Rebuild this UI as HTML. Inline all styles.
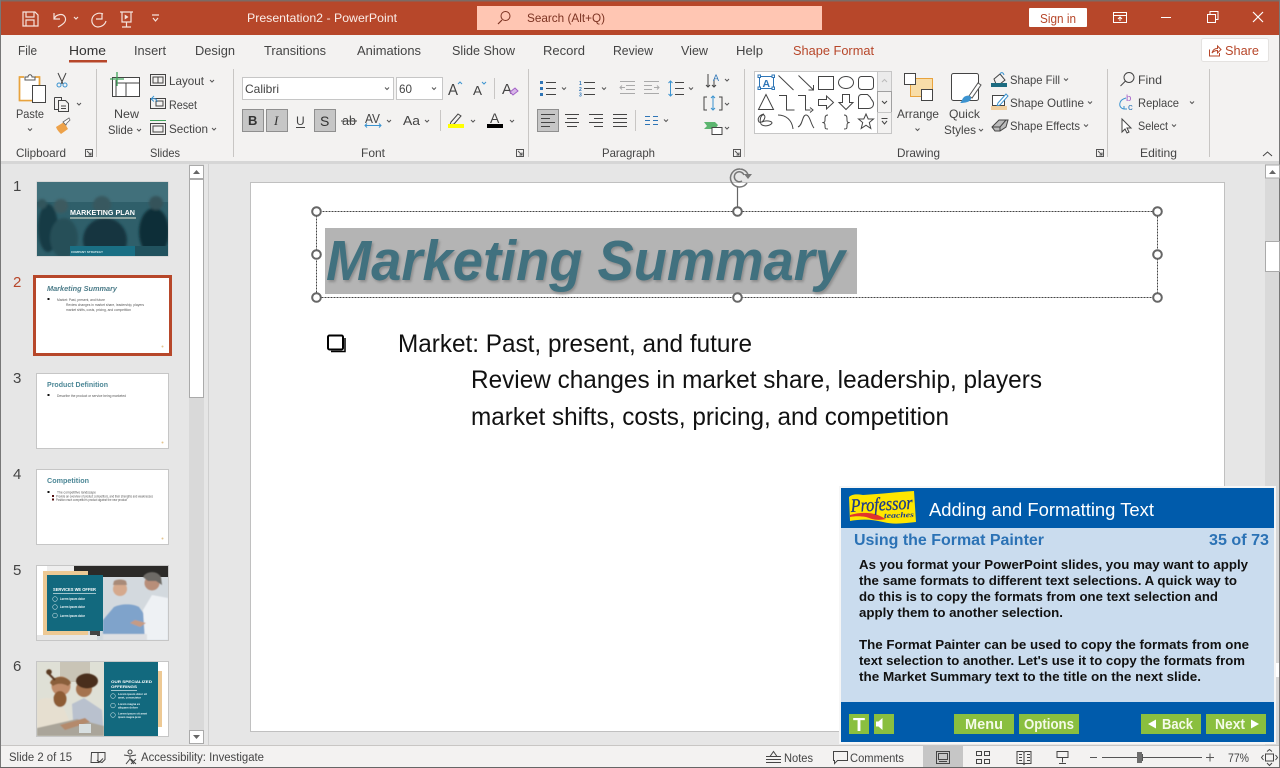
<!DOCTYPE html>
<html><head><meta charset="utf-8"><title>PowerPoint</title>
<style>
html,body{margin:0;padding:0;width:1280px;height:768px;overflow:hidden;background:#e6e6e6}
svg{display:block;font-family:"Liberation Sans",sans-serif}
.t{font-size:12px;fill:#444}
.tab{font-size:13px;fill:#444}
.st{font-size:11.5px;fill:#444}
.i{fill:none;stroke:#444;stroke-width:1}
.w{fill:#fff;stroke:#444;stroke-width:1}
.c{fill:none;stroke:#555;stroke-width:1}
.b{fill:none;stroke:#3b93d0;stroke-width:1}
.h{fill:#fff;stroke:#666;stroke-width:2}
.p{font-size:13px;font-weight:bold;fill:#111}
.g{fill:#8abf3f}
.gt{font-size:15px;font-weight:bold;fill:#f4fae8}
.tt{font-size:4px;fill:#555}
</style></head><body>
<svg width="1280" height="768" viewBox="0 0 1280 768" xmlns="http://www.w3.org/2000/svg">
<defs>
<filter id="bl" x="-30%" y="-30%" width="160%" height="160%"><feGaussianBlur stdDeviation="1.200"/></filter>
<filter id="bs" x="-30%" y="-30%" width="160%" height="160%"><feGaussianBlur stdDeviation=".6"/></filter>
<filter id="sh" x="-5%" y="-20%" width="110%" height="140%"><feGaussianBlur stdDeviation="1.300"/></filter>
<clipPath id="c1"><rect x="37" y="182" width="131" height="74"/></clipPath>
<clipPath id="c5"><rect x="37" y="566" width="131" height="74"/></clipPath>
<clipPath id="c6"><rect x="37" y="662" width="131" height="74"/></clipPath>
</defs>

<!-- backgrounds -->
<rect width="1280" height="768" fill="#e6e6e6"/>
<rect width="1280" height="35" fill="#b7472a"/>
<rect width="1280" height="1.500" fill="#7d6a64"/>
<rect y="35" width="1280" height="126" fill="#f3f2f1"/>
<rect y="161" width="1280" height="3" fill="#d6d6d6"/>

<!-- QAT -->
<g fill="none" stroke="#f6e3dc" stroke-width="1.200">
<path d="M23 12h12l3 3v11H23z"/><path d="M26 12v5h8v-5M26 26v-6h8v6"/>
<path d="M54 13v6h6M54 19c2-5 9-6 11-2s-1 7-7 10"/>
<path d="M74 17l2 2 2-2"/>
<path d="M102 13v6h-6M103 14c-4-2-10 0-11 5s3 8 6 8 7-2 8-6"/>
<path d="M120 12h13M122 12v10h9V12M126.500 22v5M122 27h9"/><path d="M125 15l3 2-3 2z" fill="#f6e3dc" stroke-width=".6"/>
<path d="M152 15h7M153 18l2.500 3 2.500-3"/>
</g>
<text x="247" y="22" font-size="12" fill="#fbeee9" textLength="150" lengthAdjust="spacingAndGlyphs">Presentation2  -  PowerPoint</text>

<!-- Search -->
<rect x="477" y="6" width="345" height="24" fill="#ffc6b3"/>
<circle cx="505.500" cy="16" r="4.500" fill="none" stroke="#7c3322" stroke-width="1"/><path d="M502 20l-4 4" stroke="#7c3322" stroke-width="1.200"/>
<text x="527" y="22" font-size="12" fill="#7c3322" textLength="78" lengthAdjust="spacingAndGlyphs">Search (Alt+Q)</text>

<!-- Sign in + window controls -->
<rect x="1029" y="8" width="58" height="19" rx="1" fill="#fff"/>
<text x="1040" y="23" font-size="12.500" fill="#b7472a" textLength="36" lengthAdjust="spacingAndGlyphs">Sign in</text>
<g fill="none" stroke="#fff" stroke-width="1">
<path d="M1113.500 12.500h13v10h-13zM1113.500 15.500h13M1120 21v-4M1118 19l2-2 2 2"/>
<path d="M1161 17.500h10"/>
<path d="M1207.500 14.500h8v8h-8zM1210 14v-2.500h8v8h-2.500"/>
<path d="M1253 12l10 10M1263 12l-10 10" stroke-width="1.200"/>
</g>

<!-- Tabs -->
<text class="tab" x="18" y="55" textLength="19" lengthAdjust="spacingAndGlyphs">File</text>
<text class="tab" x="69" y="55" textLength="37" lengthAdjust="spacingAndGlyphs" style="fill:#333">Home</text>
<rect x="69" y="60" width="38" height="2.500" fill="#b7472a"/>
<text class="tab" x="134" y="55" textLength="32" lengthAdjust="spacingAndGlyphs">Insert</text>
<text class="tab" x="195" y="55" textLength="40" lengthAdjust="spacingAndGlyphs">Design</text>
<text class="tab" x="264" y="55" textLength="62" lengthAdjust="spacingAndGlyphs">Transitions</text>
<text class="tab" x="357" y="55" textLength="64" lengthAdjust="spacingAndGlyphs">Animations</text>
<text class="tab" x="452" y="55" textLength="63" lengthAdjust="spacingAndGlyphs">Slide Show</text>
<text class="tab" x="543" y="55" textLength="42" lengthAdjust="spacingAndGlyphs">Record</text>
<text class="tab" x="613" y="55" textLength="40" lengthAdjust="spacingAndGlyphs">Review</text>
<text class="tab" x="681" y="55" textLength="27" lengthAdjust="spacingAndGlyphs">View</text>
<text class="tab" x="736" y="55" textLength="27" lengthAdjust="spacingAndGlyphs">Help</text>
<text class="tab" x="793" y="55" textLength="81" lengthAdjust="spacingAndGlyphs" style="fill:#b7472a">Shape Format</text>
<rect x="1201.500" y="38.500" width="67" height="23" rx="2" fill="#fff" stroke="#e4e2e0"/>
<path d="M1209.500 49.500v6.500h10v-3M1212 53c.8-3.500 3-4.500 5.500-4.500V46l3.500 3.500-3.500 3.500v-2.500c-2 0-4 .8-5.500 2.500z" fill="none" stroke="#b7472a"/>
<text x="1225" y="55" font-size="13" fill="#b7472a" textLength="34" lengthAdjust="spacingAndGlyphs">Share</text>

<!-- Group separators -->
<g stroke="#c8c6c4"><path d="M96.500 69v88M233.500 69v88M528.500 69v88M744.500 69v88M1107.500 69v88M1209.500 69v88"/></g>

<!-- Clipboard -->
<path d="M24 77h-4.500v23.500H32M35 77h4.500v8" fill="#fff" stroke="#e8a33d" stroke-width="1.500"/>
<rect x="20.500" y="78" width="18" height="22" fill="#fff"/>
<path d="M24 77h-4.500v23.500H32M35 77h4.500v8" fill="none" stroke="#e8a33d" stroke-width="1.500"/>
<path d="M25 79v-2h3c0-3 4-3 4 0h3v3h-10z" fill="#fff" stroke="#555"/>
<rect x="32.500" y="85.500" width="13" height="17" fill="#fff" stroke="#444"/>
<text class="t" x="16" y="118" textLength="28" lengthAdjust="spacingAndGlyphs">Paste</text>
<path class="c" d="M28 128.500l2 2 2-2"/>
<path class="i" d="M58 73l5 11M66 73l-5 11"/><circle cx="59" cy="85" r="2" class="b"/><circle cx="65" cy="85" r="2" class="b"/>
<path class="i" d="M54.500 97.500h7v3M54.500 97.500v12h4M58.500 100.500h7l3 3v8h-10z"/><path class="i" d="M61 106h5M61 108.500h5"/>
<path class="c" d="M77 103l2 2 2-2"/>
<path d="M56 127l8-5 4 7-7 5c-2-2-4-4-5-7z" fill="#eda24a"/><path d="M63 122l3-2 3-2 1 2-3 3 -1 2z" fill="#fff" stroke="#666" stroke-width=".8"/>
<text class="t" x="16" y="157" textLength="50" lengthAdjust="spacingAndGlyphs">Clipboard</text>
<path class="c" d="M85.500 149.500h7v7h-7zM87 151l4 4M91 152.500V155h-2.500" stroke-width=".8"/>

<!-- Slides -->
<rect x="112.500" y="77.500" width="27" height="19" fill="#fff" stroke="#444"/><path class="i" d="M116 83h23M126 83v13M116 80v16"/>
<path d="M117 72v14M110 79h14" stroke="#3fa35a" stroke-width="1.300"/>
<text class="t" x="114" y="118" textLength="25" lengthAdjust="spacingAndGlyphs">New</text>
<text class="t" x="108" y="134" textLength="25" lengthAdjust="spacingAndGlyphs">Slide</text>
<path class="c" d="M137 129l2 2 2-2"/>
<path class="i" d="M150.500 74.500h15v11h-15zM153 77h10v6h-10zM158 77v6"/>
<text class="t" x="169" y="85" textLength="35" lengthAdjust="spacingAndGlyphs">Layout</text><path class="c" d="M210 80l2 2 2-2"/>
<path class="i" d="M150.500 98.500h15v10h-15zM156 101h7v5h-7z"/><path class="b" d="M151 99l3-3M151 99l3 2.500M151 99c4-1 6 0 6 3"/>
<text class="t" x="169" y="109" textLength="28" lengthAdjust="spacingAndGlyphs">Reset</text>
<path d="M150 120.500h16" stroke="#3fa35a"/><path class="i" d="M150.500 123.500h15v11h-15zM153 126h10v6h-10z"/>
<text class="t" x="169" y="133" textLength="39" lengthAdjust="spacingAndGlyphs">Section</text><path class="c" d="M212 128l2 2 2-2"/>
<text class="t" x="150" y="157" textLength="30" lengthAdjust="spacingAndGlyphs">Slides</text>

<!-- Font -->
<rect x="242.500" y="77.500" width="151" height="22" fill="#fff" stroke="#c6c6c6"/>
<text class="t" x="245" y="93" textLength="34" lengthAdjust="spacingAndGlyphs">Calibri</text><path class="c" d="M385 87.500l2 2 2-2"/>
<rect x="396.500" y="77.500" width="46" height="22" fill="#fff" stroke="#c6c6c6"/>
<text class="t" x="399" y="93" textLength="13" lengthAdjust="spacingAndGlyphs">60</text><path class="c" d="M432 87.500l2 2 2-2"/>
<text x="448" y="95" font-size="16" fill="#444" textLength="10" lengthAdjust="spacingAndGlyphs">A</text><path d="M458 84l2-2 2 2" fill="none" stroke="#3b93d0"/>
<text x="473" y="95" font-size="13" fill="#444" textLength="9" lengthAdjust="spacingAndGlyphs">A</text><path d="M482 82l2 2 2-2" fill="none" stroke="#3b93d0"/>
<path stroke="#c8c6c4" d="M494.500 78v21"/>
<text x="502" y="94" font-size="15" fill="#444" textLength="10" lengthAdjust="spacingAndGlyphs">A</text><path d="M510 92l5-4 3 3-5 4z" fill="#d8b8e8" stroke="#a25fc7"/>
<rect x="242.500" y="109.500" width="21" height="22" fill="#c6c6c6" stroke="#8f8f8f"/>
<text x="248" y="125" font-size="13" font-weight="bold" fill="#333">B</text>
<rect x="266.500" y="109.500" width="21" height="22" fill="#c6c6c6" stroke="#8f8f8f"/>
<text x="274" y="125" font-size="13" font-style="italic" fill="#333" font-family="Liberation Serif">I</text>
<text x="296" y="125" font-size="12" fill="#444">U</text><path d="M296 127.500h9" stroke="#444"/>
<rect x="314.500" y="109.500" width="21" height="22" fill="#c6c6c6" stroke="#8f8f8f"/>
<text x="320" y="126" font-size="14" fill="#333">S</text>
<text x="342" y="125" font-size="12.500" fill="#444">ab</text><path d="M341 121h16" stroke="#444"/>
<text x="365" y="123" font-size="13" fill="#444" textLength="15" lengthAdjust="spacingAndGlyphs">AV</text>
<path d="M365 125.500h16M367 123.500l-2 2 2 2M379 123.500l2 2-2 2" fill="none" stroke="#3b93d0"/>
<path class="c" d="M387 120l2 2 2-2"/>
<text x="403" y="125" font-size="13" fill="#444" textLength="17" lengthAdjust="spacingAndGlyphs">Aa</text><path class="c" d="M425 120l2 2 2-2"/>
<path stroke="#c8c6c4" d="M440.500 110v21"/>
<path class="i" d="M451 122l7-8 3 2-7 8-4 1z"/><rect x="448" y="124" width="16" height="4" fill="#ffff00"/><path class="c" d="M471 120l2 2 2-2"/>
<text x="490" y="123" font-size="14" fill="#444">A</text><rect x="487" y="124" width="16" height="4" fill="#000"/><path class="c" d="M510 120l2 2 2-2"/>
<text class="t" x="361" y="157" textLength="24" lengthAdjust="spacingAndGlyphs">Font</text>
<path class="c" d="M516.500 149.500h7v7h-7zM518 151l4 4M522 152.500V155h-2.500" stroke-width=".8"/>

<!-- Paragraph -->
<g fill="#2e75b6"><rect x="540" y="81" width="3" height="3"/><rect x="540" y="87" width="3" height="3"/><rect x="540" y="93" width="3" height="3"/></g>
<path class="i" d="M546 82.500h10M546 88.500h10M546 94.500h10"/><path class="c" d="M562 87.500l2 2 2-2"/>
<g fill="#2e75b6" font-size="5" font-weight="bold"><text x="579" y="85">1</text><text x="579" y="91">2</text><text x="579" y="96.500">3</text></g>
<path class="i" d="M584 82.500h11M584 88.500h11M584 94.500h11"/><path class="c" d="M602 87.500l2 2 2-2"/>
<path d="M620 81.500h15M626 85.500h9M626 89.500h9M620 93.500h15" stroke="#aaa" fill="none"/><path d="M625 87.500h-5M622 85.500l-2 2 2 2" stroke="#aaa" fill="none"/>
<path d="M644 81.500h15M644 85.500h8M644 89.500h8M644 93.500h15" stroke="#aaa" fill="none"/><path d="M654 87.500h5M657 85.500l2 2-2 2" stroke="#aaa" fill="none"/>
<path class="b" d="M670.500 81v15M668.500 83l2-2 2 2M668.500 94l2 2 2-2"/><path class="i" d="M675 82.500h9M675 88.500h9M675 94.500h9"/><path class="c" d="M689 87.500l2 2 2-2"/>
<rect x="537.500" y="109.500" width="21" height="22" fill="#c6c6c6" stroke="#8f8f8f"/>
<path class="i" d="M541 114.500h14M541 118.500h9M541 122.500h14M541 126.500h9"/>
<path class="i" d="M565 114.500h14M567 118.500h10M565 122.500h14M567 126.500h10"/>
<path class="i" d="M589 114.500h14M594 118.500h9M589 122.500h14M594 126.500h9"/>
<path class="i" d="M613 114.500h14M613 118.500h14M613 122.500h14M613 126.500h14"/>
<path stroke="#c8c6c4" d="M635.500 110v21"/>
<path d="M645 116.500h5M645 120.500h5M645 124.500h5M653 116.500h5M653 120.500h5M653 124.500h5" stroke="#2e75b6" fill="none"/><path class="c" d="M664 119.500l2 2 2-2"/>
<path class="i" d="M708 74v13M706 85l2 2 2-2M714 79v8M712 85l2 2 2-2"/><text x="713" y="81" font-size="9" fill="#2e75b6">A</text><path class="c" d="M725 79l2 2 2-2"/>
<path class="i" d="M707 97h-3v13h3M719 97h3v13h-3"/><path class="b" d="M713 96v14M711 98l2-2 2 2M711 108l2 2 2-2"/><path class="c" d="M725 103l2 2 2-2"/>
<path d="M704 122h11l3 3-3 4h-11l3-3z" fill="#5cb56f"/><rect x="712" y="127.500" width="10" height="7" fill="#fff" stroke="#444"/><path class="c" d="M725 127l2 2 2-2"/>
<text class="t" x="602" y="157" textLength="53" lengthAdjust="spacingAndGlyphs">Paragraph</text>
<path class="c" d="M733.500 149.500h7v7h-7zM735 151l4 4M739 152.500V155h-2.500" stroke-width=".8"/>

<!-- Shapes gallery -->
<rect x="754.500" y="71.500" width="123" height="62" fill="#fff" stroke="#c6c6c6"/>
<rect x="877.500" y="71.500" width="14" height="20" fill="#ebebeb" stroke="#c6c6c6"/>
<rect x="877.500" y="91.500" width="14" height="21" fill="#f3f2f1" stroke="#a0a0a0"/>
<rect x="877.500" y="112.500" width="14" height="21" fill="#f3f2f1" stroke="#c6c6c6"/>
<path d="M882 82l2.500-2.500L887 82" fill="none" stroke="#bbb"/><path d="M882 101l2.500 2.500 2.500-2.500" fill="none" stroke="#444"/>
<path d="M881.500 118.500h6M882 121l2.500 3 2.500-3" fill="none" stroke="#444"/>
<rect x="759.500" y="76.500" width="14" height="12" fill="none" stroke="#2e75b6"/><text x="762.500" y="87" font-size="10.500" font-weight="bold" fill="#2e75b6">A</text>
<g fill="#fff" stroke="#2e75b6"><rect x="758" y="75" width="2.500" height="2.500"/><rect x="772" y="75" width="2.500" height="2.500"/><rect x="758" y="87" width="2.500" height="2.500"/><rect x="772" y="87" width="2.500" height="2.500"/></g>
<g fill="none" stroke="#444">
<path d="M778.500 75.500l15 14.500"/>
<path d="M798.500 75.500l15 14.500M813.500 85v5h-5"/>
<rect x="818.500" y="76.500" width="15" height="13"/>
<ellipse cx="846" cy="82.500" rx="7.500" ry="6"/>
<rect x="858.500" y="76.500" width="15" height="13" rx="3"/>
<path d="M766 94.500l-7.500 15h15z"/>
<path d="M779 95.500h7.500v14.500h8"/>
<path d="M798 95.500h7.500v14.500h5M810 107.500l3 2.500-3 2.500"/>
<path d="M818.500 99.500h8v-3.500l7 6.500-7 6.500v-3.500h-8z"/>
<path d="M842.500 94.500h7v8h3.500l-7 7-7-7h3.500z"/>
<path d="M858.500 98c0-3 2-3.500 3-3.500h6l3 3c0 2 3 3 3 6 0 4-3 5-5 5h-10z"/>
<path d="M764 114c-5 1-7 5-5 8 3 2 8-5 5-7-4-1-5 8-2 10 4 2 9 0 10-2 0-2-6-3-10-1"/>
<path d="M778 115c8 0 14 5 15 14"/>
<path d="M798 127c5-2 4-12 8-12s5 10 8 13"/>
<path d="M828 115c-3 0-3 2-3 5s-1 2-2 2.500c1 .5 2 0 2 3s0 3.500 3 3.500"/>
<path d="M844 115c3 0 3 2 3 5s1 2 2 2.500c-1 .5-2 0-2 3s0 3.500-3 3.500"/>
<path d="M866 114l2.200 5h5.300l-4.200 3.500 1.500 6-4.800-3.300-4.800 3.300 1.500-6-4.200-3.500h5.300z"/>
</g>

<!-- Arrange -->
<rect x="910.500" y="78.500" width="22" height="18" fill="#f8dda8" stroke="#e8a33d"/>
<rect x="904.500" y="73.500" width="11" height="11" fill="#fff" stroke="#444"/>
<rect x="921.500" y="89.500" width="11" height="11" fill="#fff" stroke="#444"/>
<text class="t" x="897" y="118" textLength="42" lengthAdjust="spacingAndGlyphs">Arrange</text>
<path class="c" d="M915.500 128.500l2 2 2-2"/>
<!-- Quick Styles -->
<rect x="951.500" y="73.500" width="27" height="27" rx="2" fill="#fff" stroke="#444"/>
<path d="M969 96l9-13 3 2-9 13z" fill="#fff" stroke="#555"/><path d="M960 103c2-1 2-6 6-7 2-1 5 0 5 2 0 4-6 5-11 5z" fill="#3b93d0"/>
<text class="t" x="949" y="118" textLength="31" lengthAdjust="spacingAndGlyphs">Quick</text>
<text class="t" x="944" y="134" textLength="32" lengthAdjust="spacingAndGlyphs">Styles</text>
<path class="c" d="M979 129l2 2 2-2"/>
<!-- shape fill etc -->
<path class="i" d="M994 79l6-5 5 6-5 4h-4z"/><path d="M1000 74c1-2 3-2 4 1" class="b"/>
<rect x="991" y="83" width="16" height="4" fill="#1d6b80"/>
<text class="t" x="1010" y="84" textLength="50" lengthAdjust="spacingAndGlyphs">Shape Fill</text><path class="c" d="M1064 78.500l2 2 2-2"/>
<rect x="992.500" y="95.500" width="12" height="10" fill="#fff" stroke="#444"/><path d="M998 103l8-9 2 2-8 9-3 1z" fill="#fff" stroke="#3b93d0"/>
<rect x="991" y="106" width="16" height="4" fill="#f0cfa0"/>
<text class="t" x="1010" y="107" textLength="74" lengthAdjust="spacingAndGlyphs">Shape Outline</text><path class="c" d="M1088 101.500l2 2 2-2"/>
<path d="M992 127l7-7h9l-2 7-6 4h-5z" fill="#bbb" stroke="#444"/><path class="i" d="M992 127h8l6-7M1000 127l0 4"/>
<text class="t" x="1010" y="130" textLength="70" lengthAdjust="spacingAndGlyphs">Shape Effects</text><path class="c" d="M1084 124.500l2 2 2-2"/>
<text class="t" x="897" y="157" textLength="43" lengthAdjust="spacingAndGlyphs">Drawing</text>
<path class="c" d="M1096.500 149.500h7v7h-7zM1098 151l4 4M1102 152.500V155h-2.500" stroke-width=".8"/>

<!-- Editing -->
<circle cx="1129" cy="77.500" r="5" class="i"/><path class="i" d="M1125.500 81l-5 5"/>
<text class="t" x="1138" y="84" textLength="24" lengthAdjust="spacingAndGlyphs">Find</text>
<text x="1126" y="101" font-size="9.500" fill="#a25fc7">b</text><text x="1128" y="110" font-size="9.500" fill="#2e75b6">c</text>
<path class="b" d="M1126 98c-8 2-8 10-2 11M1124 106l0 3 3 0"/>
<text class="t" x="1138" y="107" textLength="41" lengthAdjust="spacingAndGlyphs">Replace</text><path class="c" d="M1190 101.500l2 2 2-2"/>
<path d="M1122 119v13l3-3 2 4 2-1-2-4h4z" fill="#fff" stroke="#444"/>
<text class="t" x="1138" y="130" textLength="30" lengthAdjust="spacingAndGlyphs">Select</text><path class="c" d="M1172 124.500l2 2 2-2"/>
<text class="t" x="1140" y="157" textLength="37" lengthAdjust="spacingAndGlyphs">Editing</text>
<path d="M1263 156l4.500-4 4.500 4" fill="none" stroke="#444"/>

<!-- Thumbnail panel -->
<rect x="0" y="0" width="1" height="768" fill="#777"/><rect x="1279" y="0" width="1" height="768" fill="#777"/>
<rect x="189" y="164" width="15" height="580" fill="#d9d9d9"/>
<rect x="189.500" y="165.500" width="14" height="13" fill="#fff" stroke="#aaa"/><path d="M193 174l3.500-4 3.500 4z" fill="#666"/>
<rect x="189.500" y="179.500" width="14" height="218" fill="#fff" stroke="#aaa"/>
<rect x="189.500" y="730.500" width="14" height="13" fill="#fff" stroke="#aaa"/><path d="M193 735l3.500 4 3.500-4z" fill="#666"/>
<path d="M208.500 164v581" stroke="#cfcfcf"/>

<g font-size="15" fill="#444">
<text x="13" y="191">1</text><text x="13" y="287" fill="#b7472a">2</text><text x="13" y="383">3</text><text x="13" y="479">4</text><text x="13" y="575">5</text><text x="13" y="671">6</text></g>

<!-- Slide 1 thumb -->
<rect x="36.500" y="181.500" width="132" height="75" fill="#c6c6c6"/>
<g clip-path="url(#c1)">
<rect x="37" y="182" width="131" height="74" fill="#2f5f6a"/>
<rect x="37" y="182" width="131" height="20" fill="#41707b"/>
<g filter="url(#bl)" fill="#143a44">
<ellipse cx="48" cy="228" rx="10" ry="24"/><ellipse cx="64" cy="238" rx="14" ry="20" fill="#274f59"/>
<circle cx="61" cy="206" r="7" fill="#3d5a5e"/>
<ellipse cx="105" cy="240" rx="22" ry="22" fill="#123640"/><circle cx="102" cy="205" r="9" fill="#38585f"/>
<ellipse cx="154" cy="232" rx="15" ry="24" fill="#0f2f38"/><circle cx="156" cy="203" r="7" fill="#34535a"/>
<circle cx="42" cy="204" r="5" fill="#32545b"/>
</g>
<rect x="70" y="246" width="65" height="10" fill="#1a6f84"/>
<rect x="135" y="246" width="33" height="10" fill="#21525e"/>
</g>
<text x="70" y="215" font-size="7.500" font-weight="bold" fill="#fff" textLength="65" lengthAdjust="spacingAndGlyphs">MARKETING PLAN</text>
<rect x="70" y="217.500" width="66" height="1" fill="#e8e8d8"/>
<text x="71" y="253" font-size="3" font-weight="bold" fill="#d8eef0" textLength="32" lengthAdjust="spacingAndGlyphs">COMPANY STRATEGY</text>

<!-- Slide 2 thumb -->
<rect x="34.500" y="276.500" width="136" height="78" fill="#fff" stroke="#b7472a" stroke-width="3"/>
<text x="47" y="291" font-size="7.500" font-weight="bold" font-style="italic" fill="#4c7c89" textLength="70" lengthAdjust="spacingAndGlyphs">Marketing Summary</text>
<rect x="47.500" y="298" width="2" height="2" fill="#111"/>
<text class="tt" x="57" y="301" textLength="48" lengthAdjust="spacingAndGlyphs">Market: Past, present, and future</text>
<text class="tt" x="66" y="306" textLength="78" lengthAdjust="spacingAndGlyphs">Review changes in market share, leadership, players</text>
<text class="tt" x="66" y="311" textLength="65" lengthAdjust="spacingAndGlyphs">market shifts, costs, pricing, and competition</text>
<circle cx="162.500" cy="346.500" r="1" fill="#e3c58f"/>

<!-- Slide 3 thumb -->
<rect x="36.500" y="373.500" width="132" height="75" fill="#fff" stroke="#c6c6c6"/>
<text x="47" y="387" font-size="7" font-weight="bold" fill="#4c8796" textLength="61" lengthAdjust="spacingAndGlyphs">Product Definition</text>
<rect x="47.500" y="394" width="2" height="2" fill="#111"/>
<text class="tt" x="57" y="397" textLength="69" lengthAdjust="spacingAndGlyphs">Describe the product or service being marketed</text>
<circle cx="162.500" cy="442.500" r="1" fill="#e3c58f"/>

<!-- Slide 4 thumb -->
<rect x="36.500" y="469.500" width="132" height="75" fill="#fff" stroke="#c6c6c6"/>
<text x="47" y="483" font-size="7" font-weight="bold" fill="#4c8796" textLength="42" lengthAdjust="spacingAndGlyphs">Competition</text>
<rect x="47.500" y="491" width="2" height="2" fill="#111"/>
<text class="tt" x="57" y="493.500" textLength="39" lengthAdjust="spacingAndGlyphs">The competitive landscape</text>
<rect x="52" y="495" width="2" height="2" fill="#511"/><rect x="52" y="498.500" width="2" height="2" fill="#511"/>
<text class="tt" x="56" y="497.500" textLength="97" lengthAdjust="spacingAndGlyphs">Provide an overview of product competitors, and their strengths and weaknesses</text>
<text class="tt" x="56" y="501" textLength="71" lengthAdjust="spacingAndGlyphs">Position each competitor's product against the new product</text>
<circle cx="162.500" cy="538.500" r="1" fill="#e3c58f"/>

<!-- Slide 5 thumb -->
<rect x="36.500" y="565.500" width="132" height="75" fill="#fff" stroke="#c6c6c6"/>
<g clip-path="url(#c5)">
<rect x="47" y="566" width="121" height="74" fill="#d3d9de"/>
<rect x="47" y="566" width="27" height="8" fill="#eee"/>
<rect x="74" y="566" width="94" height="11" fill="#2b2a28"/>
<g filter="url(#bs)">
<path d="M103 640v-20l11-13c6-3 18-4 25 0l7 10 3 23z" fill="#7fa3cb"/>
<circle cx="120" cy="589" r="7" fill="#d5a98d"/>
<path d="M113 585h14l-1-4c-3-2-9-2-12 0z" fill="#a88a78"/>
<path d="M145 640l-2-30 9-15 16 3v42z" fill="#eef1f4"/>
<circle cx="152" cy="583" r="7.500" fill="#b88e79"/>
<path d="M143 577c3-6 14-7 18 0l1 8-6-4-8 0z" fill="#6d6a66"/>
<path d="M140 627l-10-4 5-3 11 3z" fill="#c69b84"/>
<path d="M103 634h44v6h-44z" fill="#dfe0e3"/>
</g>
<rect x="90" y="630" width="10" height="6" fill="#444"/>
<rect x="43" y="571" width="45" height="64" fill="#edc994"/>
<rect x="37" y="635" width="60" height="5" fill="#e6e6e6"/>
</g>
<rect x="47" y="575" width="56" height="56" fill="#12697e"/>
<text x="53" y="591" font-size="4.500" font-weight="bold" fill="#fff" textLength="43" lengthAdjust="spacingAndGlyphs">SERVICES WE OFFER</text>
<rect x="53" y="593" width="43" height=".7" fill="#dcecef"/>
<g fill="none" stroke="#bcd6dc" stroke-width=".6"><circle cx="55" cy="599" r="2.300"/><circle cx="55" cy="607" r="2.300"/><circle cx="55" cy="615.500" r="2.300"/></g>
<g font-size="3.300" font-weight="bold" fill="#eaf4f6"><text x="60" y="600" textLength="25" lengthAdjust="spacingAndGlyphs">Lorem ipsum dolor</text><text x="60" y="608" textLength="25" lengthAdjust="spacingAndGlyphs">Lorem ipsum dolor</text><text x="60" y="617" textLength="25" lengthAdjust="spacingAndGlyphs">Lorem ipsum dolor</text></g>

<!-- Slide 6 thumb -->
<rect x="36.500" y="661.500" width="132" height="75" fill="#fff" stroke="#c6c6c6"/>
<g clip-path="url(#c6)">
<rect x="37" y="662" width="67" height="74" fill="#dfe0d6"/>
<rect x="60" y="662" width="30" height="20" fill="#c9c4b6"/>
<g filter="url(#bs)">
<path d="M37 702c5-6 20-5 25 2l14 32H37z" fill="#e6dfd0"/>
<circle cx="61" cy="686" r="9.500" fill="#c08c6a"/>
<path d="M50 683c2-8 18-8 21 0l-3 3c-5-3-11-3-15 0z" fill="#8a5f3a"/>
<ellipse cx="60" cy="699" rx="6.500" ry="8" fill="#8d5b35"/>
<circle cx="49" cy="672" r="2.800" fill="#5a3a22"/>
<path d="M49 674l6 6" stroke="#5a3a22" stroke-width="2"/>
<path d="M72 704l12-6 18 12 2 26H74z" fill="#b9c1ce"/>
<circle cx="84" cy="689" r="8" fill="#a5734f"/>
<ellipse cx="87" cy="681" rx="11" ry="7.500" fill="#4a2d1a"/>
<path d="M37 728l40-9 27 7v10H37z" fill="#aaa59a"/>
<path d="M60 725l25-7 5 4-25 8z" fill="#b48a6c"/>
</g>
<rect x="79" y="724" width="12" height="9" fill="#d8dfe0"/>
</g>
<rect x="158" y="671" width="4" height="56" fill="#edc994"/>
<rect x="104" y="662" width="54" height="74" fill="#12697e"/>
<text x="111" y="683" font-size="4" font-weight="bold" fill="#fff" textLength="41" lengthAdjust="spacingAndGlyphs">OUR SPECIALIZED</text>
<text x="111" y="688" font-size="4" font-weight="bold" fill="#fff" textLength="26" lengthAdjust="spacingAndGlyphs">OFFERINGS</text>
<rect x="111" y="690" width="26" height=".7" fill="#dcecef"/>
<g fill="none" stroke="#bcd6dc" stroke-width=".6"><circle cx="113" cy="696" r="2.300"/><circle cx="113" cy="705.500" r="2.300"/><circle cx="113" cy="715" r="2.300"/></g>
<g font-size="3" font-weight="bold" fill="#eaf4f6"><text x="118" y="695" textLength="29" lengthAdjust="spacingAndGlyphs">Lorem ipsum dolor sit</text><text x="118" y="698.500" textLength="23" lengthAdjust="spacingAndGlyphs">amet, consectetur</text><text x="118" y="705" textLength="22" lengthAdjust="spacingAndGlyphs">Lorem magna ex</text><text x="118" y="708.500" textLength="20" lengthAdjust="spacingAndGlyphs">aliquam dolore</text><text x="118" y="714.500" textLength="29" lengthAdjust="spacingAndGlyphs">Lorem ipsum sit amet</text><text x="118" y="718" textLength="23" lengthAdjust="spacingAndGlyphs">ipsum magna justo</text></g>

<!-- Main canvas -->
<rect x="250.500" y="182.500" width="974" height="549" fill="#fff" stroke="#c0c0c0"/>
<rect x="325" y="228" width="532" height="66" fill="#b4b4b4"/>
<text x="327.500" y="282" font-size="57" font-weight="bold" font-style="italic" fill="#8c8c8c" filter="url(#sh)" textLength="519" lengthAdjust="spacingAndGlyphs">Marketing Summary</text>
<text x="326" y="280" font-size="57" font-weight="bold" font-style="italic" fill="#41717f" textLength="519" lengthAdjust="spacingAndGlyphs">Marketing Summary</text>
<rect x="316.500" y="211.500" width="841" height="86" fill="none" stroke="#444" stroke-dasharray="2 1"/>
<path d="M737.500 186v25" stroke="#666" stroke-width="1.200"/>
<circle class="h" cx="316.500" cy="211.500" r="4.300"/><circle class="h" cx="737.500" cy="211.500" r="4.300"/><circle class="h" cx="1157.500" cy="211.500" r="4.300"/>
<circle class="h" cx="316.500" cy="254.500" r="4.300"/><circle class="h" cx="1157.500" cy="254.500" r="4.300"/>
<circle class="h" cx="316.500" cy="297.500" r="4.300"/><circle class="h" cx="737.500" cy="297.500" r="4.300"/><circle class="h" cx="1157.500" cy="297.500" r="4.300"/>
<g fill="none" stroke="#777" stroke-width="1.500"><path d="M748 175c-1-4-5-6-8-6a9 9 0 1 0 7 14"/><path d="M744 175a5 5 0 1 0-2 6"/></g><path d="M744 174h8l-4 5z" fill="#777"/>

<rect x="328" y="335.500" width="15" height="14" rx="1.500" fill="#fff" stroke="#000" stroke-width="2"/>
<path d="M345 338v13.500H331" fill="none" stroke="#000" stroke-width="1.500"/>
<g font-size="24.600" fill="#111">
<text x="398" y="352" textLength="354" lengthAdjust="spacingAndGlyphs">Market: Past, present, and future</text>
<text x="471" y="388" textLength="571" lengthAdjust="spacingAndGlyphs">Review changes in market share, leadership, players</text>
<text x="471" y="425" textLength="478" lengthAdjust="spacingAndGlyphs">market shifts, costs, pricing, and competition</text>
</g>

<!-- Right scrollbar -->
<rect x="1265" y="164" width="14" height="581" fill="#d9d9d9"/>
<rect x="1265.500" y="165" width="14" height="13" fill="#fff" stroke="#aaa"/><path d="M1269 174l3.500-4 3.500 4z" fill="#666"/>
<rect x="1265.500" y="241.500" width="14" height="30" fill="#fff" stroke="#aaa"/>
<rect x="1276" y="663" width="3" height="14" fill="#fff"/>

<!-- Tutorial panel -->
<rect x="839" y="486" width="437" height="258" fill="#f6f6f6"/>
<rect x="841" y="488" width="433" height="254" fill="#cadcee"/>
<rect x="841" y="488" width="433" height="40" fill="#005bab"/>
<rect x="841" y="702" width="433" height="40" fill="#005bab"/>
<path d="M849 497c3-3 8-3 14-2 18-1 34-3 51-4l2 31c-10 1-22 3-33 0-12-3-22-3-33-1z" fill="#ffe600"/>
<path d="M850 515c10-3 22-3 30 1l6 3c-10 2-14 0-20-2-6-1-11-1-16 0z" fill="#e2342c"/>
<text x="0" y="0" font-size="19" font-style="italic" font-family="Liberation Serif" fill="#1c3a8c" stroke="#1c3a8c" stroke-width=".3" textLength="62" lengthAdjust="spacingAndGlyphs" transform="translate(851,512) rotate(-3)">Professor</text>
<text x="0" y="0" font-size="7.500" font-style="italic" font-weight="bold" font-family="Liberation Serif" fill="#1c3a8c" textLength="30" lengthAdjust="spacingAndGlyphs" transform="translate(884,518) rotate(-2)">teaches</text>
<text x="929" y="516" font-size="18.500" fill="#fff" textLength="225" lengthAdjust="spacingAndGlyphs">Adding and Formatting Text</text>
<text x="854" y="545" font-size="15.500" font-weight="bold" fill="#2b72b5" textLength="190" lengthAdjust="spacingAndGlyphs">Using the Format Painter</text>
<text x="1209" y="545" font-size="15.500" font-weight="bold" fill="#2b72b5" textLength="60" lengthAdjust="spacingAndGlyphs">35 of 73</text>
<text class="p" x="859" y="569" textLength="389" lengthAdjust="spacingAndGlyphs">As you format your PowerPoint slides, you may want to apply</text>
<text class="p" x="859" y="585" textLength="378" lengthAdjust="spacingAndGlyphs">the same formats to different text selections. A quick way to</text>
<text class="p" x="859" y="601" textLength="359" lengthAdjust="spacingAndGlyphs">do this is to copy the formats from one text selection and</text>
<text class="p" x="859" y="617" textLength="204" lengthAdjust="spacingAndGlyphs">apply them to another selection.</text>
<text class="p" x="859" y="649" textLength="390" lengthAdjust="spacingAndGlyphs">The Format Painter can be used to copy the formats from one</text>
<text class="p" x="859" y="665" textLength="386" lengthAdjust="spacingAndGlyphs">text selection to another. Let's use it to copy the formats from</text>
<text class="p" x="859" y="681" textLength="342" lengthAdjust="spacingAndGlyphs">the Market Summary text to the title on the next slide.</text>

<rect class="g" x="849" y="714" width="20" height="20"/><text x="853" y="731" font-size="18" font-weight="bold" fill="#fff" textLength="12" lengthAdjust="spacingAndGlyphs">T</text>
<rect class="g" x="874" y="714" width="20" height="20"/><path d="M876 721.500h2.500l4-3.500v12l-4-3.500H876z" fill="#fff"/>
<rect class="g" x="954" y="714" width="60" height="20"/><text class="gt" x="965" y="729" textLength="38" lengthAdjust="spacingAndGlyphs">Menu</text>
<rect class="g" x="1019" y="714" width="60" height="20"/><text class="gt" x="1024" y="729" textLength="50" lengthAdjust="spacingAndGlyphs">Options</text>
<rect class="g" x="1141" y="714" width="60" height="20"/><path d="M1148 724l8-4.500v9z" fill="#fff"/><text class="gt" x="1162" y="729" textLength="31" lengthAdjust="spacingAndGlyphs">Back</text>
<rect class="g" x="1206" y="714" width="60" height="20"/><text class="gt" x="1215" y="729" textLength="30" lengthAdjust="spacingAndGlyphs">Next</text><path d="M1259 724l-8-4.500v9z" fill="#fff"/>

<!-- Status bar -->
<rect x="1" y="745" width="1278" height="22" fill="#f3f2f1"/>
<rect x="1" y="745" width="1278" height="1" fill="#c8c6c4"/>
<rect y="767" width="1280" height="1" fill="#666"/>
<text class="st" x="9" y="761" textLength="63" lengthAdjust="spacingAndGlyphs">Slide 2 of 15</text>
<path class="i" d="M91.500 752.500h13.500v7l-3 3-3-1-1 1h-7z M98 752.500v9M97 760l2 2.500 4-4"/>
<circle cx="130" cy="752" r="2" class="i"/><path class="i" d="M124 755l6 1 6-1M130 756v3l-4 5M130 759l4 5M131 759l5 5M136 759l-5 5"/>
<text class="st" x="141" y="761" textLength="123" lengthAdjust="spacingAndGlyphs">Accessibility: Investigate</text>
<path class="i" d="M766 756.500h15M766 759.500h15M766 762.500h15M770 756.500l3.500-5 3.500 5"/>
<text class="st" x="784" y="762" textLength="29" lengthAdjust="spacingAndGlyphs">Notes</text>
<path class="i" d="M833.500 751.500h14v9h-10l-3 3v-3h-1z"/>
<text class="st" x="850" y="762" textLength="54" lengthAdjust="spacingAndGlyphs">Comments</text>
<rect x="923" y="746" width="40" height="21" fill="#c6c6c6"/>
<path class="i" d="M936.500 751.500h13v12h-13zM938.500 753.500h9v6h-9zM939 761.500h8"/>
<path class="i" d="M976.500 751.500h5v4h-5zM984.500 751.500h5v4h-5zM976.500 759.500h5v4h-5zM984.500 759.500h5v4h-5z"/>
<path class="i" d="M1017 751.500h6l1 1 1-1h6v12h-6l-1 1-1-1h-6zM1024 752v12M1019 754.500h3M1019 757.500h3M1019 760.500h3M1027 754.500h3M1027 757.500h3M1027 760.500h3"/>
<path class="i" d="M1057 751.500h11v6h-11zM1062.500 757.500v5M1059 763.500h7"/>
<path d="M1090 757.500h7M1102 757.500h100M1206 757.500h8" stroke="#555" fill="none"/>
<path d="M1210 753.500v8M1142.500 754v7" stroke="#555" fill="none"/>
<rect x="1137" y="752" width="5" height="11" fill="#6e6e6e"/>
<text class="st" x="1228" y="762" textLength="21" lengthAdjust="spacingAndGlyphs">77%</text>
<path class="i" d="M1265.500 754h8v7h-8zM1263.500 755l-2 2.500 2 2.500M1275.500 755l2 2.500-2 2.500M1267 751.500l2.500-2 2.500 2M1267 763l2.500 2.500 2.500-2.500"/>
</svg>
</body></html>
